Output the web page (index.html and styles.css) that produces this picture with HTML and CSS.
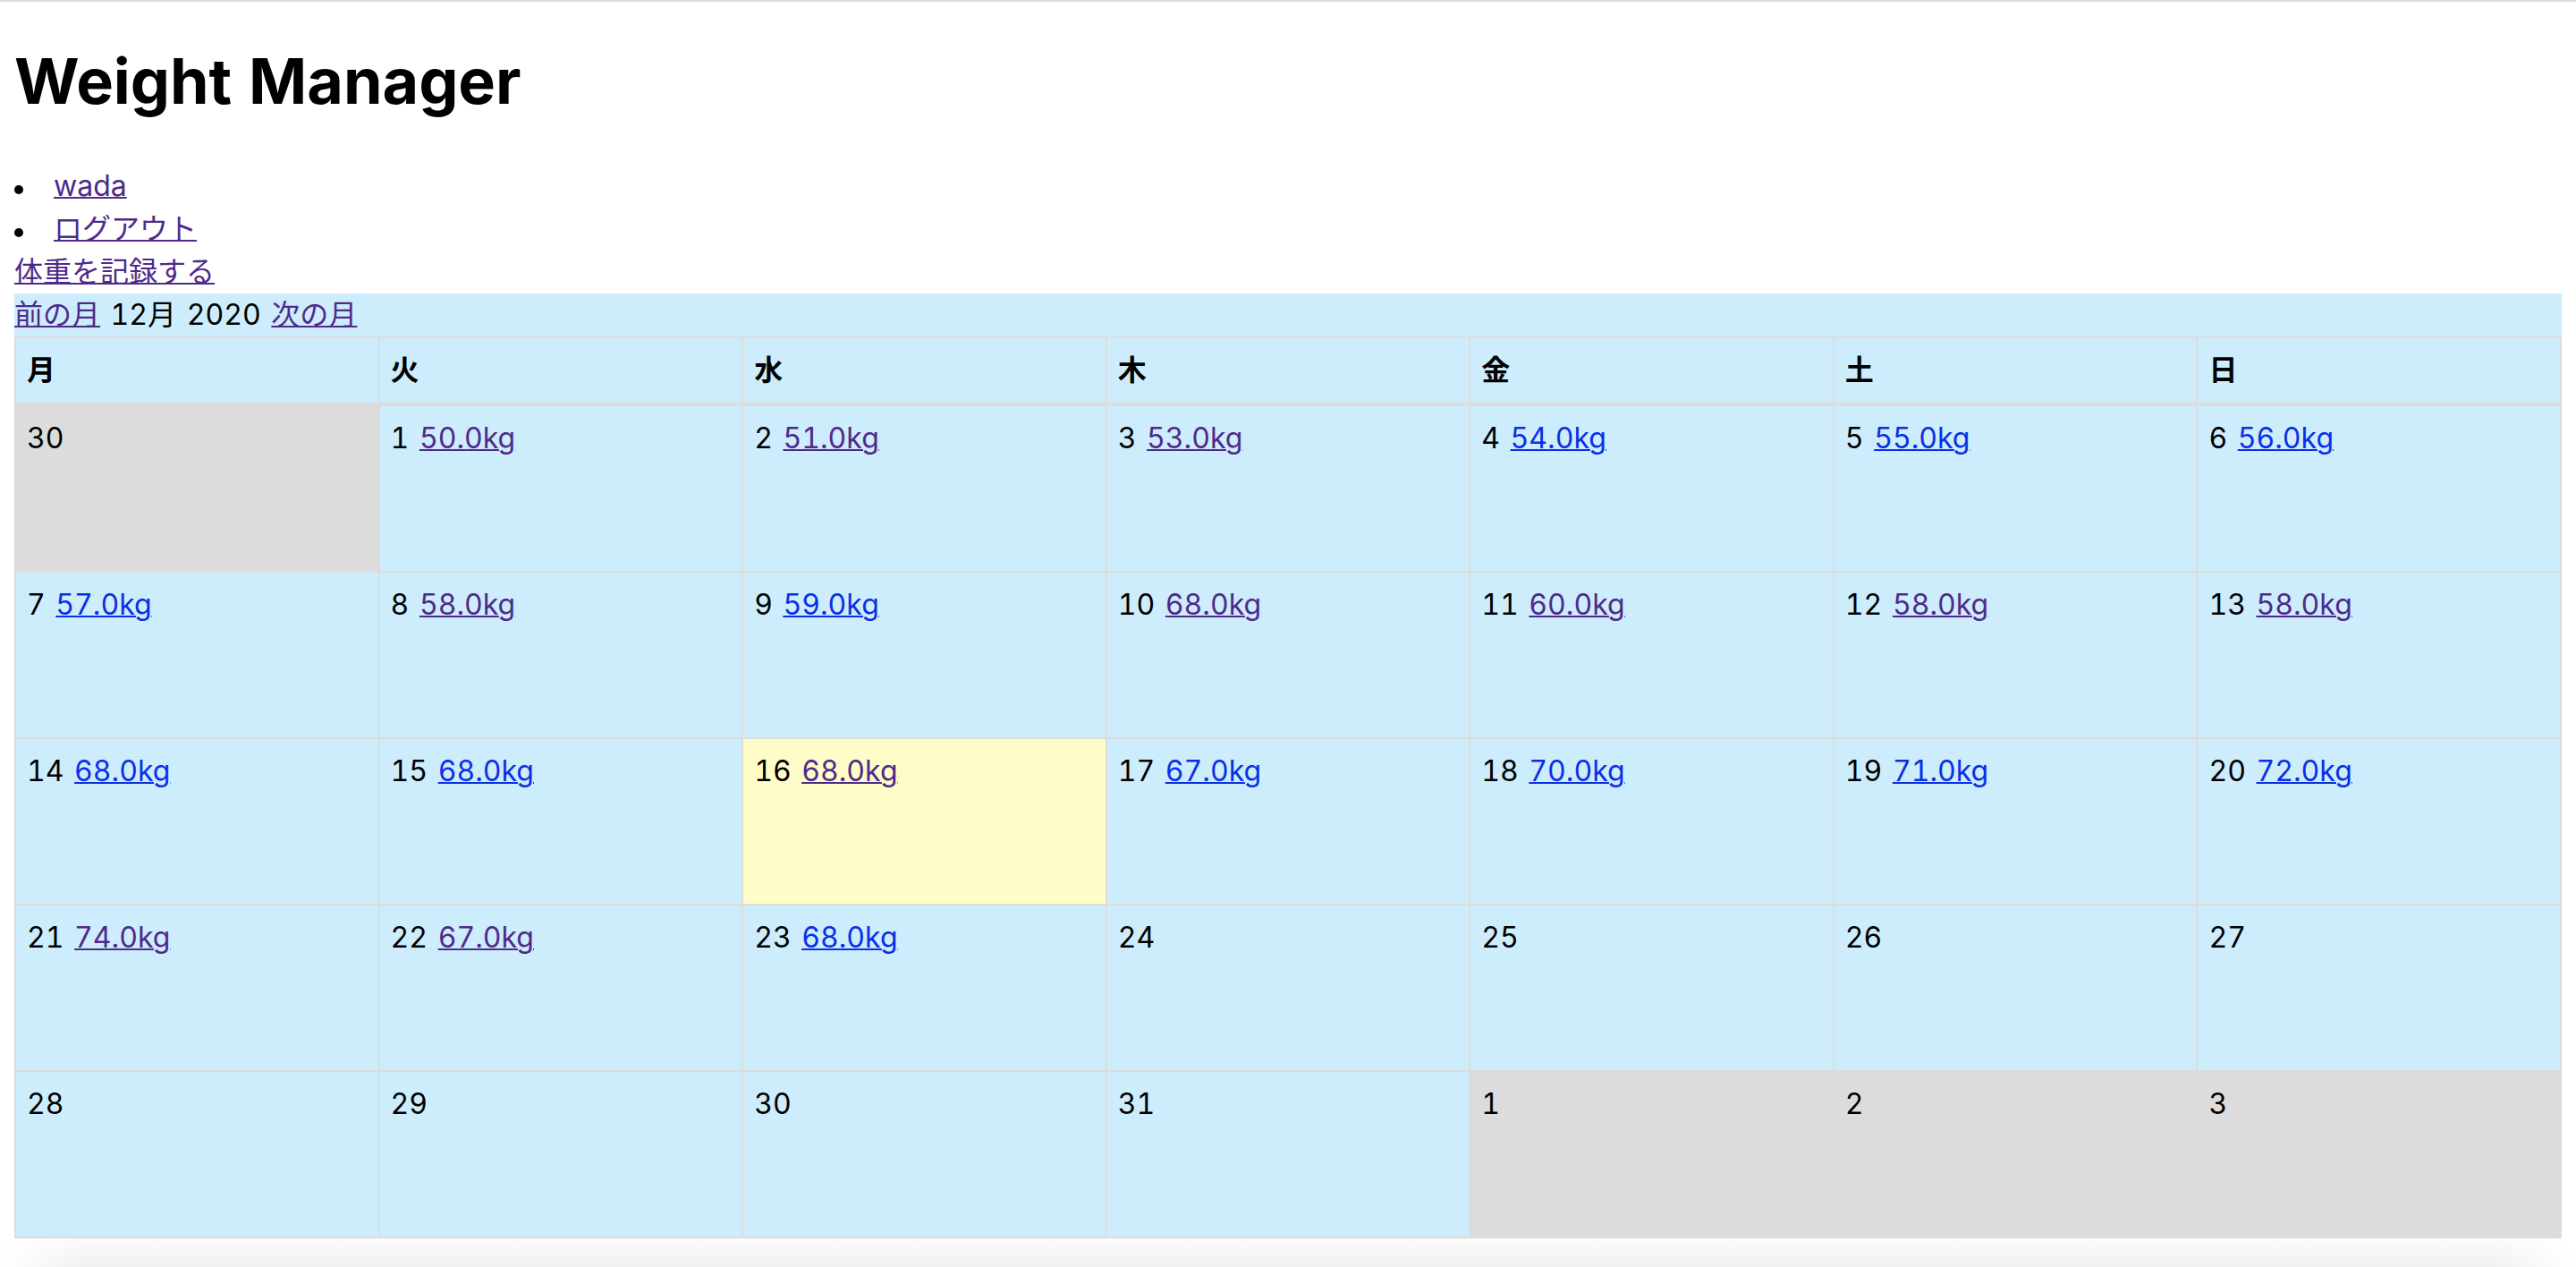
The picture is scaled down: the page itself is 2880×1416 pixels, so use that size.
FILE: index.html
```html
<!DOCTYPE html>
<html lang="ja">
<head>
<meta charset="utf-8">
<title>Weight Manager</title>
<link rel="stylesheet" href="styles.css">
</head>
<body>
<div class="page">
  <h1 class="title">Weight Manager</h1>
  <ul class="user-menu">
    <li><a class="link visited" href="#">wada</a></li>
    <li><a class="link visited" href="#">ログアウト</a></li>
  </ul>
  <div class="record-line"><a class="link visited" href="#">体重を記録する</a></div>
  <table class="calendar">
    <caption class="calendar-nav"><a class="link visited" href="#">前の月</a> 12月 2020 <a class="link visited" href="#">次の月</a></caption>
    <thead>
      <tr><th>月</th><th>火</th><th>水</th><th>木</th><th>金</th><th>土</th><th>日</th></tr>
    </thead>
    <tbody>
      <tr>
        <td class="other-month">30</td>
        <td>1 <a class="link visited" href="#">50.0kg</a></td>
        <td>2 <a class="link visited" href="#">51.0kg</a></td>
        <td>3 <a class="link visited" href="#">53.0kg</a></td>
        <td>4 <a class="link" href="#">54.0kg</a></td>
        <td>5 <a class="link" href="#">55.0kg</a></td>
        <td>6 <a class="link" href="#">56.0kg</a></td>
      </tr>
      <tr>
        <td>7 <a class="link" href="#">57.0kg</a></td>
        <td>8 <a class="link visited" href="#">58.0kg</a></td>
        <td>9 <a class="link" href="#">59.0kg</a></td>
        <td>10 <a class="link visited" href="#">68.0kg</a></td>
        <td>11 <a class="link visited" href="#">60.0kg</a></td>
        <td>12 <a class="link visited" href="#">58.0kg</a></td>
        <td>13 <a class="link visited" href="#">58.0kg</a></td>
      </tr>
      <tr>
        <td>14 <a class="link" href="#">68.0kg</a></td>
        <td>15 <a class="link" href="#">68.0kg</a></td>
        <td class="today">16 <a class="link visited" href="#">68.0kg</a></td>
        <td>17 <a class="link" href="#">67.0kg</a></td>
        <td>18 <a class="link" href="#">70.0kg</a></td>
        <td>19 <a class="link" href="#">71.0kg</a></td>
        <td>20 <a class="link" href="#">72.0kg</a></td>
      </tr>
      <tr>
        <td>21 <a class="link visited" href="#">74.0kg</a></td>
        <td>22 <a class="link visited" href="#">67.0kg</a></td>
        <td>23 <a class="link" href="#">68.0kg</a></td>
        <td>24</td>
        <td>25</td>
        <td>26</td>
        <td>27</td>
      </tr>
      <tr>
        <td>28</td>
        <td>29</td>
        <td>30</td>
        <td>31</td>
        <td class="other-month">1</td>
        <td class="other-month">2</td>
        <td class="other-month">3</td>
      </tr>
    </tbody>
  </table>
</div>
<div class="bottom-shade"></div>
</body>
</html>
```
FILE: styles.css
```css
html {
  background: #ffffff;
}

body {
  margin: 0;
  border-top: 2px solid #dcdcdf;
  font-family: Inter, "Noto Sans CJK JP", sans-serif;
  font-size: 32px;
  line-height: 48px;
  font-variant-numeric: tabular-nums;
  word-spacing: 3px;
  color: #000000;
}

.page {
  padding: 0 16px 16px;
}

.title {
  font-size: 70px;
  font-weight: 700;
  line-height: 96px;
  word-spacing: 0;
  margin: 41px 0 45px;
}

.user-menu {
  list-style: none;
  margin: 0;
  padding: 0;
}

.user-menu li::before {
  content: "";
  display: inline-block;
  width: 10px;
  height: 10px;
  border-radius: 50%;
  background: #000000;
  margin-right: 34px;
  vertical-align: 2px;
}

.link {
  color: #0a30e6;
  text-decoration: underline;
  text-decoration-thickness: 2px;
}

.link.visited {
  color: #4f2a8a;
}

.calendar {
  width: 100%;
  border-collapse: collapse;
  table-layout: fixed;
}

.calendar-nav {
  caption-side: top;
  text-align: left;
  background: #cdedfd;
  line-height: 48px;
}

.calendar th,
.calendar td {
  border: 2px solid #dcdcdc;
  padding: 12px 12px;
  text-align: left;
  vertical-align: top;
  background: #cdedfd;
}

.calendar th {
  font-weight: 700;
  border-bottom-width: 4px;
}

.calendar td {
  height: 160px;
}

.calendar td.other-month {
  background: #dcdcdc;
}

.calendar td.today {
  background: #fffdc7;
}

.bottom-shade {
  position: fixed;
  left: 0;
  right: 0;
  bottom: 0;
  height: 32px;
  background: linear-gradient(to bottom, #fbfbfb, #f1f1f1);
  -webkit-mask-image: linear-gradient(to right, transparent 0, #000 90px, #000 calc(100% - 90px), transparent 100%);
  mask-image: linear-gradient(to right, transparent 0, #000 90px, #000 calc(100% - 90px), transparent 100%);
}
```
